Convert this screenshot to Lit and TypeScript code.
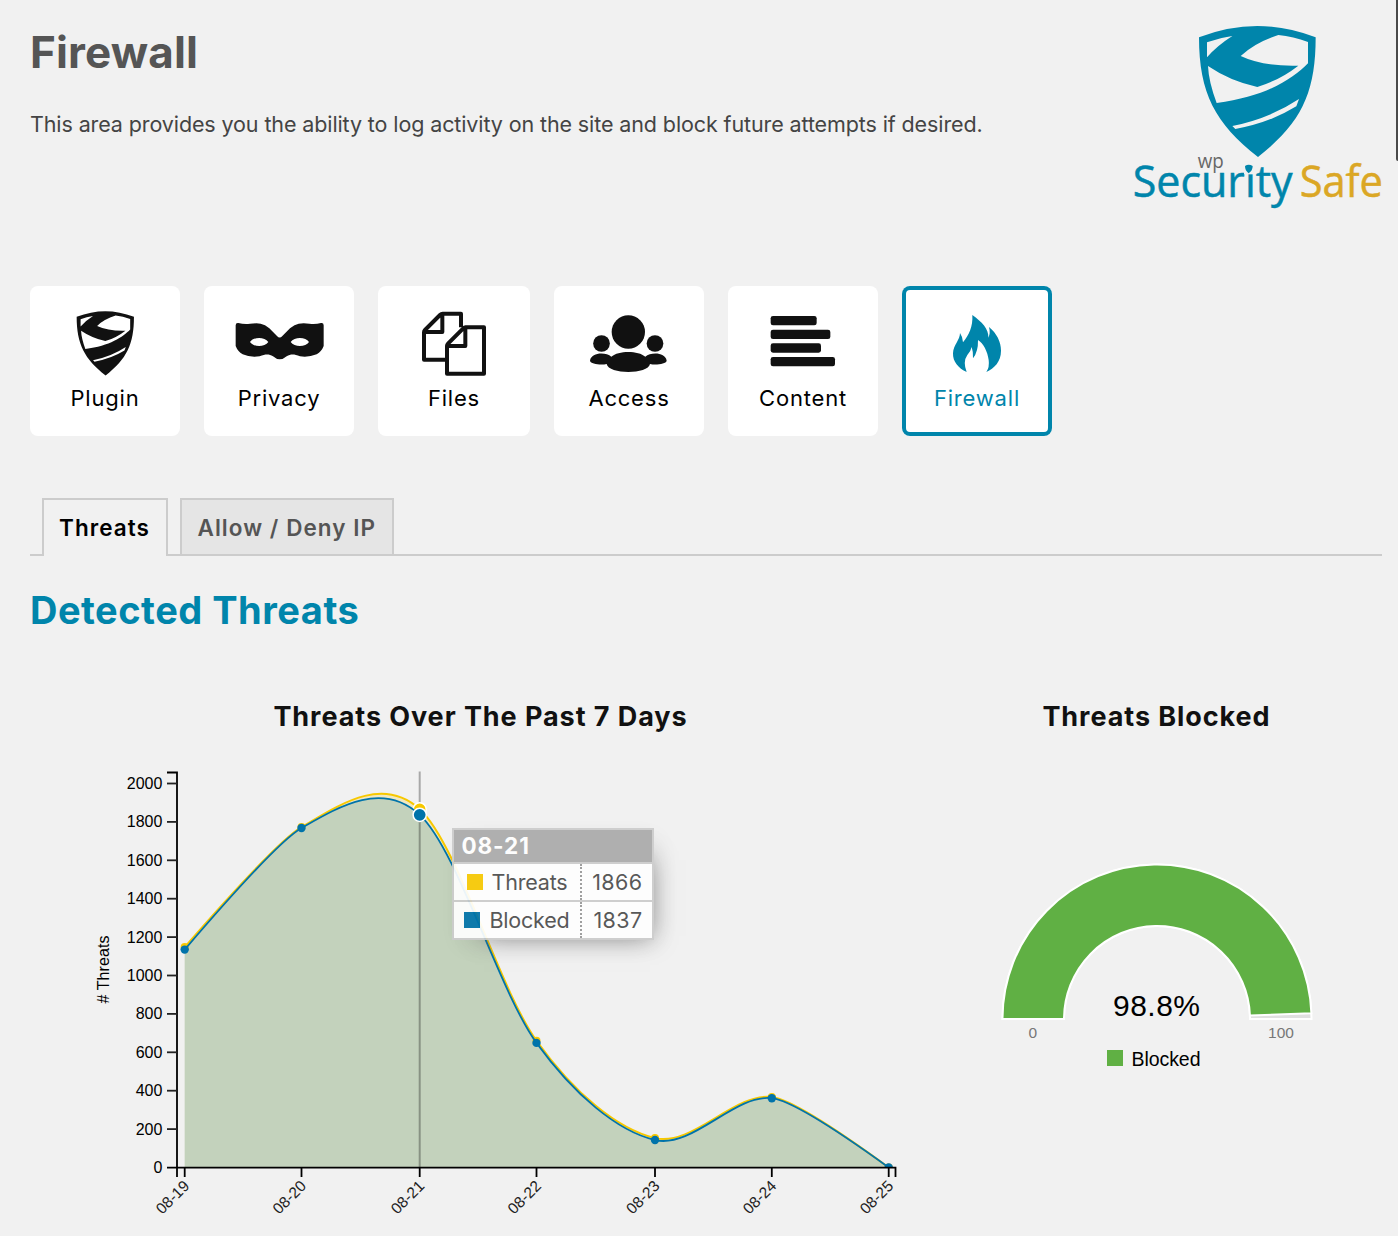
import { LitElement, html, svg, css } from "lit";
import { classMap } from "lit/directives/class-map.js";

const shield = svg`<path fill="currentColor" fill-rule="evenodd" d="M237 82Q412 14 587 82C587 250 543 340 414 441C285 340 237 250 237 82ZM261 97Q298 83 337 78Q290 108 261 142ZM362 138Q405 97 475 75Q520 80 564 96V160C520 205 440 260 290 279Q266 215 264 168Q330 213 412 231Q480 210 535 167Q430 170 362 138ZM537 267L529 289Q450 338 346 357L337 348Q450 325 537 267Z"/>`;

const icons = {
  plugin: svg`<g transform="translate(170 93) scale(.491) translate(-237 -47)">${shield}</g>`,
  privacy: svg`<path fill="currentColor" fill-rule="evenodd" d="M647 136Q647 128 655 129Q672 133 690 131Q712 129 722 131Q735 133 748 145L771 168Q779 177 787 168L810 145Q824 133 836 131Q850 129 868 131Q887 133 903 129Q911 128 911 136V198Q905 214 890 223Q865 233 840 229C822 222 812 222 800 229Q790 238 779 238Q769 238 759 229C747 222 737 222 719 229Q690 233 668 223Q653 214 647 198ZM690 186C700 170 734 170 745 186C734 202 700 202 690 186ZM812 186C823 170 857 170 867 186C857 202 823 202 812 186Z"/>`,
  files: svg`<g fill="none" stroke="currentColor" stroke-width="12" stroke-linejoin="round"><path d="M228 239H162V157Q162 153 165 150L210 105Q214 101 218 101H273V142M217 101V156H162"/><path d="M286 142H342V281H231V198Q231 194 234 191L279 146Q283 142 287 142ZM286 142V198H231"/></g>`,
  access: svg`<g fill="currentColor"><circle cx="775" cy="156" r="50"/><circle cx="694.500" cy="190.500" r="25"/><circle cx="855" cy="190.500" r="25"/><path d="M660 242C664 216 708 216 724 230C745 211 805 211 826 230C842 216 886 216 890 242C888 252 858 256 840 252C835 284 715 284 710 252C692 256 662 252 660 242Z"/></g>`,
  content: svg`<g fill="currentColor"><rect x="167" y="108" width="138" height="28" rx="7"/><rect x="167" y="149" width="179" height="28" rx="7"/><rect x="167" y="190" width="151" height="28" rx="7"/><rect x="167" y="231" width="193" height="28" rx="7"/></g>`,
  firewall: svg`<path fill="currentColor" d="M772 105C800 125 822 147 820 173Q827 160 822 141C845 160 858 185 858 212C858 245 838 265 814 276Q824 262 821 240C818 215 805 190 789 180Q790 215 774 235Q775 215 770 201Q767 215 757 225Q743 245 755 276C730 265 713 245 714 220C715 195 735 180 735 159Q743 170 744 187C762 165 774 140 772 105Z"/>`,
};

const cards = [
  { label: "Plugin", icon: icons.plugin, box: "30 18 450 291" },
  { label: "Privacy", icon: icons.privacy, box: "552 18 450 291" },
  { label: "Files", icon: icons.files, box: "24 18 456 291", wide: true },
  { label: "Access", icon: icons.access, box: "552 18 450 291" },
  { label: "Content", icon: icons.content, box: "39 18 450 291" },
  { label: "Firewall", icon: icons.firewall, box: "561 18 450 291", active: true },
];

type Pt = [number, number];
const xs = [184.7, 301.5, 419.7, 536.5, 655, 771.8, 888.7];
const days = ["08-19", "08-20", "08-21", "08-22", "08-23", "08-24", "08-25"];
const BASE = 1167.5;
const yOf = (v: number) => BASE - v * 0.192;
const blocked = [1135, 1768, 1837, 649, 143, 361, 0];
const threats = [1148, 1773, 1866, 660, 153, 367, 0];
const points = (v: number[]): Pt[] => v.map((n, i) => [xs[i], yOf(n)]);

/** Cardinal spline with quadratic end segments. */
function spline(p: Pt[]): string {
  const n = p.length;
  const a = 0.16;
  const t = p.map((_, i): Pt =>
    i === 0 || i === n - 1 ? [0, 0] : [a * (p[i + 1][0] - p[i - 1][0]), a * (p[i + 1][1] - p[i - 1][1])]);
  let d = `M${p[0]}Q${p[1][0] - (t[1][0] * 2) / 3},${p[1][1] - (t[1][1] * 2) / 3},${p[1]}`;
  for (let i = 2; i < n - 1; i++) {
    d += `C${p[i - 1][0] + t[i - 1][0]},${p[i - 1][1] + t[i - 1][1]},${p[i][0] - t[i][0]},${p[i][1] - t[i][1]},${p[i]}`;
  }
  return d + `Q${p[n - 2][0] + (t[n - 2][0] * 2) / 3},${p[n - 2][1] + (t[n - 2][1] * 2) / 3},${p[n - 1]}`;
}

function arc(from: number, to: number): string {
  const at = (r: number, f: number) => `${1157 - r * Math.cos(Math.PI * f)} ${1019 - r * Math.sin(Math.PI * f)}`;
  return `M${at(154.5, from)}A154.500 154.500 0 0 1 ${at(154.5, to)}L${at(93, to)}A93 93 0 0 0 ${at(93, from)}Z`;
}

class AppRoot extends LitElement {
  static styles = css`
    :host { display: block; position: relative; box-sizing: border-box; width: 1398px; height: 1236px; overflow: hidden; padding: 10px 16px 0 30px; background: #f1f1f1; color: #444; font-family: Inter, "Open Sans", sans-serif; }
    h1, h2, h3, p { margin: 0; }
    svg { display: block; overflow: visible; }
    .header { display: flex; justify-content: space-between; height: 276px; }
    .intro { padding-top: 12px; }
    h1 { font-size: 44px; line-height: 60px; font-weight: 700; letter-spacing: 0.15px; color: #555; }
    .intro p { margin-top: 27px; font-size: 21.5px; line-height: 30px; letter-spacing: -0.11px; white-space: nowrap; }
    .logo { width: 262px; height: 210px; color: #0085ab; font-family: "Open Sans", sans-serif; }
    .cards { display: flex; gap: 24px; }
    .card { width: 150px; height: 150px; border-radius: 8px; background: #fff; color: #111; text-align: center; }
    .card.wide { width: 152px; }
    .card.active { color: #0085ab; box-shadow: inset 0 0 0 4px #0085ab; }
    .card span { display: block; font-size: 22px; line-height: 30px; letter-spacing: 0.8px; color: #000; }
    .card.active span { color: #0085ab; }
    .card svg { width: 100%; height: 97px; }
    .tabs { display: flex; gap: 12px; height: 56px; margin-top: 62px; padding-left: 12px; border-bottom: 2px solid #ccc; }
    .tab { box-sizing: border-box; height: 56px; padding-left: 15.5px; border: 2px solid #ccc; border-bottom: 0; background: #e5e5e5; font-size: 22.5px; line-height: 56px; font-weight: 600; letter-spacing: 1.05px; color: #555; white-space: nowrap; width: 214px; }
    .tab.active { width: 126px; height: 58px; padding-left: 15px; background: #f1f1f1; color: #000; }
    h2 { margin-top: 34px; font-size: 38px; line-height: 41px; font-weight: 700; letter-spacing: 0.5px; color: #0085ab; }
    .charts { display: grid; grid-template-columns: 901px 451px; margin-top: 65px; }
    h3 { font-size: 27px; line-height: 41px; font-weight: 700; letter-spacing: 0.93px; text-align: center; color: #111; }
    .plot { position: relative; margin-top: 23px; }
    .plot text { font-family: "Liberation Sans", Arial, sans-serif; font-size: 16px; fill: #000; }
    .plot .day { font-size: 15.5px; fill: #222; }
    .plot .muted { font-size: 15.5px; fill: #777; }
    .plot .value { font-size: 30px; }
    .plot .legend { font-size: 19.5px; }
    .tooltip { position: absolute; left: 422px; top: 68px; box-sizing: border-box; width: 202px; height: 112px; border: 2px solid #ccc; background: #fff; opacity: 0.92; box-shadow: 14px 14px 24px -18px #777, 6px 8px 22px -4px rgba(0, 0, 0, 0.08); color: #4c4c4c; font-size: 21.5px; line-height: 36px; }
    .date { height: 32px; padding-left: 7.5px; background: #aaa; border-bottom: 2px solid #ccc; color: #fff; font-size: 22.5px; line-height: 32px; font-weight: 700; letter-spacing: 0.9px; }
    .row { display: grid; grid-template-columns: 126px 72px; height: 36px; }
    .row + .row { border-top: 2px solid #ccc; }
    .name { display: flex; align-items: center; justify-content: center; gap: 9px; letter-spacing: -0.2px; }
    .num { box-sizing: border-box; border-left: 2px dotted #999; padding-right: 9.5px; text-align: right; letter-spacing: 0.4px; }
    .swatch { width: 16px; height: 16px; background: #f7c800; }
    .swatch.blue { background: #0073aa; }
    .scroll { position: absolute; right: 0; top: 0; width: 2px; height: 161px; background: #4a4a4a; border-radius: 0 0 0 2px; }
  `;

  private line() {
    const b = points(blocked);
    const t = points(threats);
    const close = `L${xs[6]},${BASE}L${xs[0]},${BASE}Z`;
    return html`<svg width="901" height="476" viewBox="30 760 901 476">
      <path d="${spline(t) + close}" fill="#f7c800" opacity=".2"/>
      <path d="${spline(b) + close}" fill="#0073aa" opacity=".19"/>
      <path d="M419.700 771.500V1167" stroke="#000" stroke-opacity=".3" stroke-width="2"/>
      <path d="${spline(t)}" fill="none" stroke="#f7c800" stroke-width="2"/>
      ${t.map((p, i) => svg`<circle cx="${p[0]}" cy="${p[1]}" r="${i === 2 ? 6.5 : 4}" fill="#f7c800" stroke="#fff" stroke-width="${i === 2 ? 1.5 : 0}"/>`)}
      <path d="${spline(b)}" fill="none" stroke="#0073aa" stroke-width="1.800"/>
      ${b.map((p, i) => svg`<circle cx="${p[0]}" cy="${p[1]}" r="${i === 2 ? 6.6 : 4.2}" fill="#0073aa" stroke="#fff" stroke-width="${i === 2 ? 1.5 : 0}"/>`)}
      <rect x="880" y="1168" width="16" height="5" fill="#f1f1f1"/>
      <g fill="none" stroke="#000" stroke-width="1.800">
        <path d="M167 772.500H177V1167.700H167M177 1177V1167.700H895.500V1177"/>
        ${xs.map((x) => svg`<path d="M${x} 1167.700V1177"/>`)}
        ${Array.from({ length: 10 }, (_, i) => svg`<path stroke="#222" d="M167 ${yOf((i + 1) * 200)}H177"/>`)}
      </g>
      ${Array.from({ length: 11 }, (_, i) => svg`<text x="162.400" y="${yOf(i * 200) + 5.4}" text-anchor="end">${i * 200}</text>`)}
      ${days.map((d, i) => svg`<text class="day" transform="translate(${xs[i] + 5.6} 1187) rotate(-45)" text-anchor="end">${d}</text>`)}
      <text transform="translate(109.300 969.500) rotate(-90)" text-anchor="middle" textLength="68">${"# Threats"}</text>
    </svg>`;
  }

  private gauge() {
    return html`<svg width="451" height="476" viewBox="931 760 451 476">
      <path d="${arc(0, 1)}" fill="#e0e0e0" stroke="#fff" stroke-width="2"/>
      <path d="${arc(0, 0.988)}" fill="#60b044" stroke="#fff" stroke-width="2"/>
      <text class="value" x="1156.500" y="1015.700" text-anchor="middle" textLength="87">98.8%</text>
      <text class="muted" x="1032.700" y="1038" text-anchor="middle">0</text>
      <text class="muted" x="1281" y="1038" text-anchor="middle">100</text>
      <rect x="1107" y="1050" width="16" height="16" fill="#60b044"/>
      <text class="legend" x="1131.500" y="1066" textLength="69">Blocked</text>
    </svg>`;
  }

  render() {
    return html`
      <div class="header">
        <div class="intro">
          <h1>Firewall</h1>
          <p>This area provides you the ability to log activity on the site and block future attempts if desired.</p>
        </div>
        <svg class="logo" viewBox="0 0 786 630">
          ${shield}
          <g stroke-width="1.500">
            <text x="38" y="561" font-size="129" textLength="480" lengthAdjust="spacingAndGlyphs" fill="currentColor" stroke="currentColor">Security</text>
            <text x="539" y="561" font-size="129" textLength="250" lengthAdjust="spacingAndGlyphs" fill="#dba725" stroke="#dba725">Safe</text>
          </g>
          <text x="233" y="475" font-size="58" textLength="78" lengthAdjust="spacingAndGlyphs" fill="#666">wp</text>
          <rect x="372" y="455" width="30" height="38" fill="#f1f1f1"/>
          <path fill="currentColor" d="M375 468Q386 461 398 468Q398 482 386 490Q375 482 375 468Z"/>
        </svg>
      </div>
      <div class="cards">
        ${cards.map((c) => html`<div class=${classMap({ card: true, wide: !!c.wide, active: !!c.active })}>
          <svg viewBox="${c.box}">${c.icon}</svg><span>${c.label}</span>
        </div>`)}
      </div>
      <div class="tabs"><div class="tab active">Threats</div><div class="tab">Allow / Deny IP</div></div>
      <h2>Detected Threats</h2>
      <div class="charts">
        <div>
          <h3>Threats Over The Past 7 Days</h3>
          <div class="plot">
            ${this.line()}
            <div class="tooltip">
              <div class="date">08-21</div>
              <div class="row"><div class="name"><i class="swatch"></i>Threats</div><div class="num">1866</div></div>
              <div class="row"><div class="name"><i class="swatch blue"></i>Blocked</div><div class="num">1837</div></div>
            </div>
          </div>
        </div>
        <div>
          <h3>Threats Blocked</h3>
          <div class="plot">${this.gauge()}</div>
        </div>
      </div>
      <div class="scroll"></div>
    `;
  }
}
customElements.define("app-root", AppRoot);
